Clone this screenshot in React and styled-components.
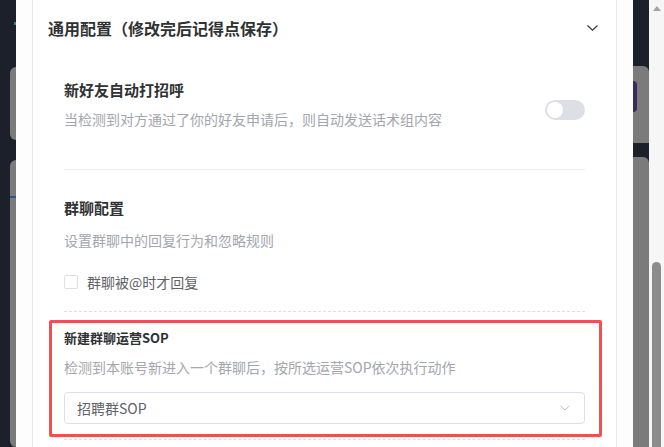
import React from 'react';
import styled, { createGlobalStyle } from 'styled-components';

const GlobalStyle = createGlobalStyle`
	html, body {
		margin: 0;
		padding: 0;
		overflow: hidden;
	}
	body {
		font-family: "Noto Sans CJK SC", "Noto Sans", sans-serif;
		background: #1b202a;
	}
`;

const Chevron = ({ width = 11, height = 6, color = '#303133' }) => (
	<svg width={width} height={height} viewBox='0 0 11 6' fill='none'>
		<path d='M0.5 0.5L5.5 5.2L10.5 0.5' stroke={color} strokeWidth='1.1' />
	</svg>
);

const App = () => {
	return (
		<Page>
			<GlobalStyle />
			<BackdropLeft>
				<Mark />
				<DimCard $top={67} $height={73} />
				<DimCard $top={20} $grow>
					<TabLine />
				</DimCard>
			</BackdropLeft>

			<Panel>
				<Card>
					<HeaderRow>
						<span>通用配置（修改完后记得点保存）</span>
						<Chevron />
					</HeaderRow>

					<Body>
						<SwitchRow>
							<div>
								<ItemTitle>新好友自动打招呼</ItemTitle>
								<ItemDesc $gap={7}>当检测到对方通过了你的好友申请后，则自动发送话术组内容</ItemDesc>
							</div>
							<Toggle>
								<Knob />
							</Toggle>
						</SwitchRow>

						<Divider />

						<ItemTitle $gap={27}>群聊配置</ItemTitle>
						<ItemDesc $gap={10}>设置群聊中的回复行为和忽略规则</ItemDesc>
						<CheckRow>
							<CheckBox />
							群聊被@时才回复
						</CheckRow>

						<Divider $dashed $gap={18} />

						<Highlight>
							<SmallTitle>新建群聊运营SOP</SmallTitle>
							<ItemDesc $gap={9} $lh={20}>
								检测到本账号新进入一个群聊后，按所选运营SOP依次执行动作
							</ItemDesc>
							<Select>
								<span>招聘群SOP</span>
								<Chevron width={10} height={6} color='#c0c4cc' />
							</Select>
						</Highlight>

						<Divider $dashed $gap={2} />
					</Body>
				</Card>
			</Panel>

			<BackdropRight>
				<DimSide $top={66} $height={77}>
					<Accent />
				</DimSide>
				<DimSide $top={14} $grow />
			</BackdropRight>

			<Scrollbar>
				<ArrowUp />
				<Thumb />
			</Scrollbar>
		</Page>
	);
};

export default App;

// ########### styled components ###########
const Page = styled.div`
	width: 664px;
	height: 447px;
	display: flex;
	overflow: hidden;
	background: #1b202a;
`;

const BackdropLeft = styled.div`
	width: 16px;
	flex-shrink: 0;
	display: flex;
	flex-direction: column;
	align-items: flex-end;
	position: relative;
`;

const Mark = styled.div`
	position: absolute;
	left: 14px;
	top: 22px;
	width: 2px;
	height: 3px;
	background: #3d7f86;
`;

const DimCard = styled.div`
	width: 6px;
	margin-top: ${(p) => p.$top}px;
	height: ${(p) => (p.$grow ? 'auto' : `${p.$height}px`)};
	flex: ${(p) => (p.$grow ? 1 : 'none')};
	background: #7b7b7b;
	border-radius: 8px 0 0 8px;
	position: relative;
`;

const TabLine = styled.div`
	position: absolute;
	left: 0;
	right: 0;
	top: 36px;
	height: 2px;
	background: #2c5486;
`;

const Panel = styled.div`
	width: 617px;
	flex-shrink: 0;
	background: #fdfdfe;
	padding: 0 16px;
	box-sizing: border-box;
	overflow: hidden;
`;

const Card = styled.div`
	background: #fff;
	border-left: 1px solid #e6e8f0;
	border-right: 1px solid #e6e8f0;
	padding: 16px 16px 0 15px;
	height: 100%;
	box-sizing: border-box;
`;

const HeaderRow = styled.div`
	display: flex;
	align-items: center;
	justify-content: space-between;
	height: 24px;
	font-size: 16px;
	font-weight: 700;
	color: #303133;
	padding-right: 2px;
`;

const Body = styled.div`
	padding: 0 15px 0 16px;
`;

const SwitchRow = styled.div`
	display: flex;
	justify-content: space-between;
	align-items: flex-start;
	margin-top: 39px;
`;

const ItemTitle = styled.div`
	margin-top: ${(p) => p.$gap || 0}px;
	font-size: 15px;
	line-height: 22px;
	font-weight: 700;
	color: #303133;
`;

const ItemDesc = styled.div`
	margin-top: ${(p) => p.$gap || 0}px;
	font-size: 14px;
	line-height: ${(p) => p.$lh || 22}px;
	color: #a3a6ad;
`;

const Toggle = styled.div`
	margin-top: 21px;
	width: 40px;
	height: 20px;
	border-radius: 10px;
	background: #dcdfe6;
	display: flex;
	align-items: center;
	padding: 0 2px;
	box-sizing: border-box;
`;

const Knob = styled.div`
	width: 16px;
	height: 16px;
	border-radius: 50%;
	background: #fff;
`;

const Divider = styled.div`
	margin-top: ${(p) => (p.$gap !== undefined ? p.$gap : 39)}px;
	border-top: 1px ${(p) => (p.$dashed ? 'dashed #dcdfe6' : 'solid #ebeef5')};
`;

const CheckRow = styled.label`
	display: flex;
	align-items: center;
	gap: 9px;
	margin-top: 20px;
	height: 22px;
	font-size: 14px;
	color: #606266;
`;

const CheckBox = styled.span`
	width: 14px;
	height: 14px;
	box-sizing: border-box;
	border: 1px solid #dcdfe6;
	border-radius: 2px;
	background: #fff;
`;

const Highlight = styled.div`
	margin: 8px -17px 0 -15px;
	padding: 5px 14px 10px 12px;
	border: 3px solid #f24f52;
	border-radius: 2px;
`;

const SmallTitle = styled.div`
	font-size: 13px;
	line-height: 20px;
	font-weight: 700;
	color: #303133;
`;

const Select = styled.div`
	margin-top: 15px;
	height: 32px;
	box-sizing: border-box;
	border: 1px solid #dcdfe6;
	border-radius: 4px;
	display: flex;
	align-items: center;
	justify-content: space-between;
	padding: 0 14px 0 12px;
	font-size: 14px;
	color: #606266;
`;

const BackdropRight = styled.div`
	width: 16px;
	flex-shrink: 0;
	display: flex;
	flex-direction: column;
`;

const DimSide = styled.div`
	margin-top: ${(p) => p.$top}px;
	height: ${(p) => (p.$grow ? 'auto' : `${p.$height}px`)};
	flex: ${(p) => (p.$grow ? 1 : 'none')};
	background: #7b7b7b;
	border-radius: 0 6px 0 0;
	display: flex;
	align-items: flex-start;
`;

const Accent = styled.div`
	margin-top: 15px;
	width: 4px;
	height: 31px;
	background: #3b2a5a;
	border-radius: 0 4px 4px 0;
`;

const Scrollbar = styled.div`
	width: 15px;
	flex-shrink: 0;
	background: #f6f6f6;
	display: flex;
	flex-direction: column;
	align-items: center;
`;

const ArrowUp = styled.div`
	margin-top: 6px;
	width: 0;
	height: 0;
	border-left: 4px solid transparent;
	border-right: 4px solid transparent;
	border-bottom: 5px solid #a3a3a3;
`;

const Thumb = styled.div`
	margin-top: 251px;
	width: 9px;
	flex: 1;
	background: #8c8c8c;
	border-radius: 5px 5px 0 0;
`;
// ########### styled components ###########
